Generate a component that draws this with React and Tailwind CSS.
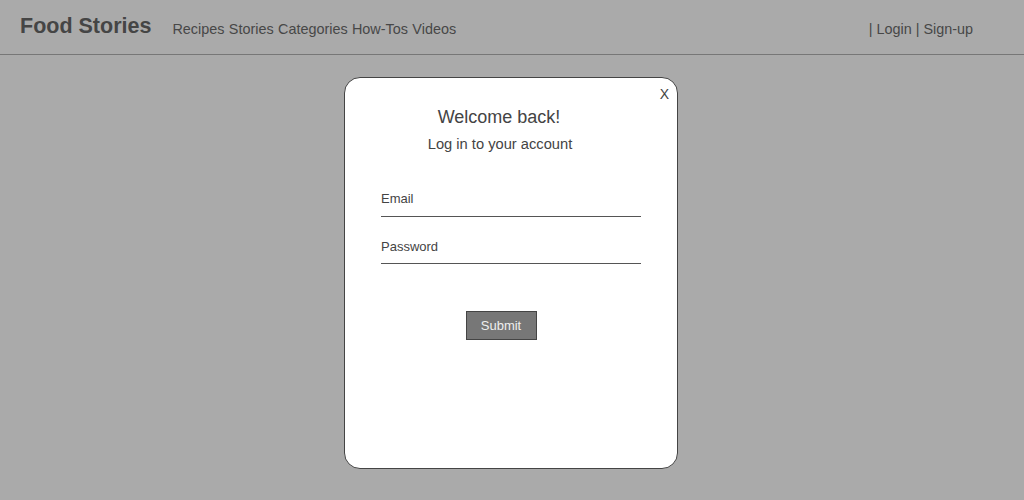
const NAV = ["Recipes", "Stories", "Categories", "How-Tos", "Videos"];

function Header() {
  return (
    <header className="h-[55px] border-b border-[#777] flex items-start px-[20px]">
      <div className="pt-[13px] text-[21.5px] leading-[26px] font-bold text-[#454545]">Food Stories</div>
      <nav className="ml-[21px] pt-[21px] text-[14.4px] leading-[17px] text-[#474747] flex gap-[4.4px]">
        {NAV.map((n) => (
          <a key={n} href="#">
            {n}
          </a>
        ))}
      </nav>
      <div className="ml-auto mr-[31px] pt-[21px] text-[14.4px] leading-[17px] text-[#474747]">
        | <a href="#">Login</a> | <a href="#">Sign-up</a>
      </div>
    </header>
  );
}

function Field({ label, type }) {
  return (
    <label className="flex flex-col border-b border-[#555] h-[26px] text-[13px] leading-[15px] text-[#444]">
      {label}
      <input type={type} className="outline-none bg-transparent h-[10px]" />
    </label>
  );
}

function LoginModal() {
  return (
    <div className="absolute left-[344px] top-[77px] w-[334px] h-[392px] bg-white border border-[#444] rounded-[16px] px-[36px] pt-[29px]">
      <button className="absolute right-[8px] top-[8px] text-[14px] leading-[16px] text-[#444]">X</button>
      <h2 className="text-[18px] leading-[21px] text-[#444] text-center pr-[24px]">Welcome back!</h2>
      <p className="mt-[8px] text-[14.7px] leading-[17px] text-[#444] text-center pr-[22px]">
        Log in to your account
      </p>
      <form className="mt-[38px] flex flex-col">
        <Field label="Email" type="email" />
        <div className="h-[22px]" />
        <label className="flex flex-col border-b border-[#555] h-[25px] text-[13px] leading-[15px] text-[#444]">
          Password
          <input type="password" className="outline-none bg-transparent h-[9px]" />
        </label>
        <div className="flex justify-center pr-[20px] mt-[47px]">
          <button
            type="button"
            className="w-[71px] h-[29px] bg-[#777] border border-[#444] text-[13px] text-[#eee]"
          >
            Submit
          </button>
        </div>
      </form>
    </div>
  );
}

export default function App() {
  return (
    <div className="relative min-h-[500px] bg-[#aaaaaa]" style={{ fontFamily: '"Liberation Sans", Arial, sans-serif' }}>
      <Header />
      <LoginModal />
    </div>
  );
}
